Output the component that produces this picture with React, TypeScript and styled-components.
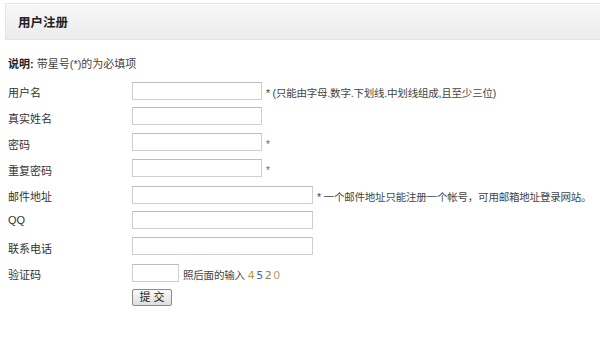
import React from "react";
import styled, { createGlobalStyle } from "styled-components";

const GlobalStyle = createGlobalStyle`
  html, body {
    margin: 0;
    padding: 0;
    background: #fff;
  }
  body {
    font-family: "Liberation Sans", "Noto Sans CJK SC", sans-serif;
    font-size: 11px;
    color: #333;
  }
`;

const Page = styled.div`
  width: 600px;
  height: 338px;
  padding: 3px 0 0 5px;
  box-sizing: border-box;
  overflow: hidden;
`;

const Header = styled.div`
  height: 37px;
  display: flex;
  align-items: center;
  padding-left: 12px;
  border: 1px solid #e4e4e4;
  border-right: none;
  background: linear-gradient(#f7f7f7, #ececec);
  box-shadow: inset 0 1px 0 #fff;
  box-sizing: border-box;
`;

const Title = styled.h2`
  margin: 0;
  font-size: 12.5px;
  font-weight: bold;
  color: #222;
`;

const Note = styled.p`
  margin: 17px 0 0 3px;
  font-size: 11px;
  color: #444;
  line-height: 14px;
  b {
    color: #222;
  }
`;

const Form = styled.form`
  display: grid;
  grid-template-columns: 124px auto;
  grid-auto-rows: 26px;
  margin: 10px 0 0 3px;
  align-items: center;
`;

const Label = styled.label`
  color: #333;
  font-size: 11px;
  align-self: start;
  padding-top: 3px;
`;

const Field = styled.div`
  display: flex;
  align-items: center;
  gap: 4px;
  align-self: start;
  white-space: nowrap;
`;

const Input = styled.input<{ w: number }>`
  width: ${(p) => p.w}px;
  height: 18px;
  box-sizing: border-box;
  border: 1px solid #cfcfcf;
  border-top-color: #bdbdbd;
  background: #fff;
  margin: 0;
  padding: 0 2px;
`;

const Hint = styled.span`
  color: #444;
  font-size: 10.5px;
  margin-top: 4px;
  letter-spacing: -0.2px;
`;

const Star = styled.span`
  color: #666;
  font-size: 10px;
  margin-top: 5px;
`;

const Captcha = styled.span`
  font-family: "DejaVu Sans", sans-serif;
  font-size: 11px;
  letter-spacing: 1.5px;
  margin-left: 3px;
`;

const Digit = styled.span<{ c: string }>`
  color: ${(p) => p.c};
`;

const Submit = styled.button`
  width: 40px;
  height: 17px;
  padding: 0;
  font-size: 11px;
  font-family: "Liberation Sans", "Noto Sans CJK SC", sans-serif;
  letter-spacing: 3px;
  text-indent: 3px;
  color: #222;
  border: 1px solid #8a8a8a;
  border-radius: 2px;
  background: linear-gradient(#fafafa, #dedede);
  line-height: 15px;
`;

const rows: { label: string; w: number; hint?: string; star?: boolean }[] = [
  { label: "用户名", w: 130, hint: "* (只能由字母.数字.下划线.中划线组成,且至少三位)" },
  { label: "真实姓名", w: 130 },
  { label: "密码", w: 130, star: true },
  { label: "重复密码", w: 130, star: true },
  { label: "邮件地址", w: 181, hint: "* 一个邮件地址只能注册一个帐号，可用邮箱地址登录网站。" },
  { label: "QQ", w: 181 },
  { label: "联系电话", w: 181 },
];

export default function App() {
  return (
    <Page>
      <GlobalStyle />
      <Header>
        <Title>用户注册</Title>
      </Header>
      <Note>
        <b>说明:</b> 带星号(*)的为必填项
      </Note>
      <Form onSubmit={(e) => e.preventDefault()}>
        {rows.map((r) => (
          <React.Fragment key={r.label}>
            <Label>{r.label}</Label>
            <Field>
              <Input w={r.w} />
              {r.hint && <Hint>{r.hint}</Hint>}
              {r.star && <Star>*</Star>}
            </Field>
          </React.Fragment>
        ))}
        <Label>验证码</Label>
        <Field>
          <Input w={47} />
          <Hint>
            照后面的输入
            <Captcha>
              <Digit c="#b8963c">4</Digit>
              <Digit c="#4a64b0">5</Digit>
              <Digit c="#9a7a3a">2</Digit>
              <Digit c="#b0a070">0</Digit>
            </Captcha>
          </Hint>
        </Field>
        <span />
        <Field>
          <Submit type="submit">提交</Submit>
        </Field>
      </Form>
    </Page>
  );
}
